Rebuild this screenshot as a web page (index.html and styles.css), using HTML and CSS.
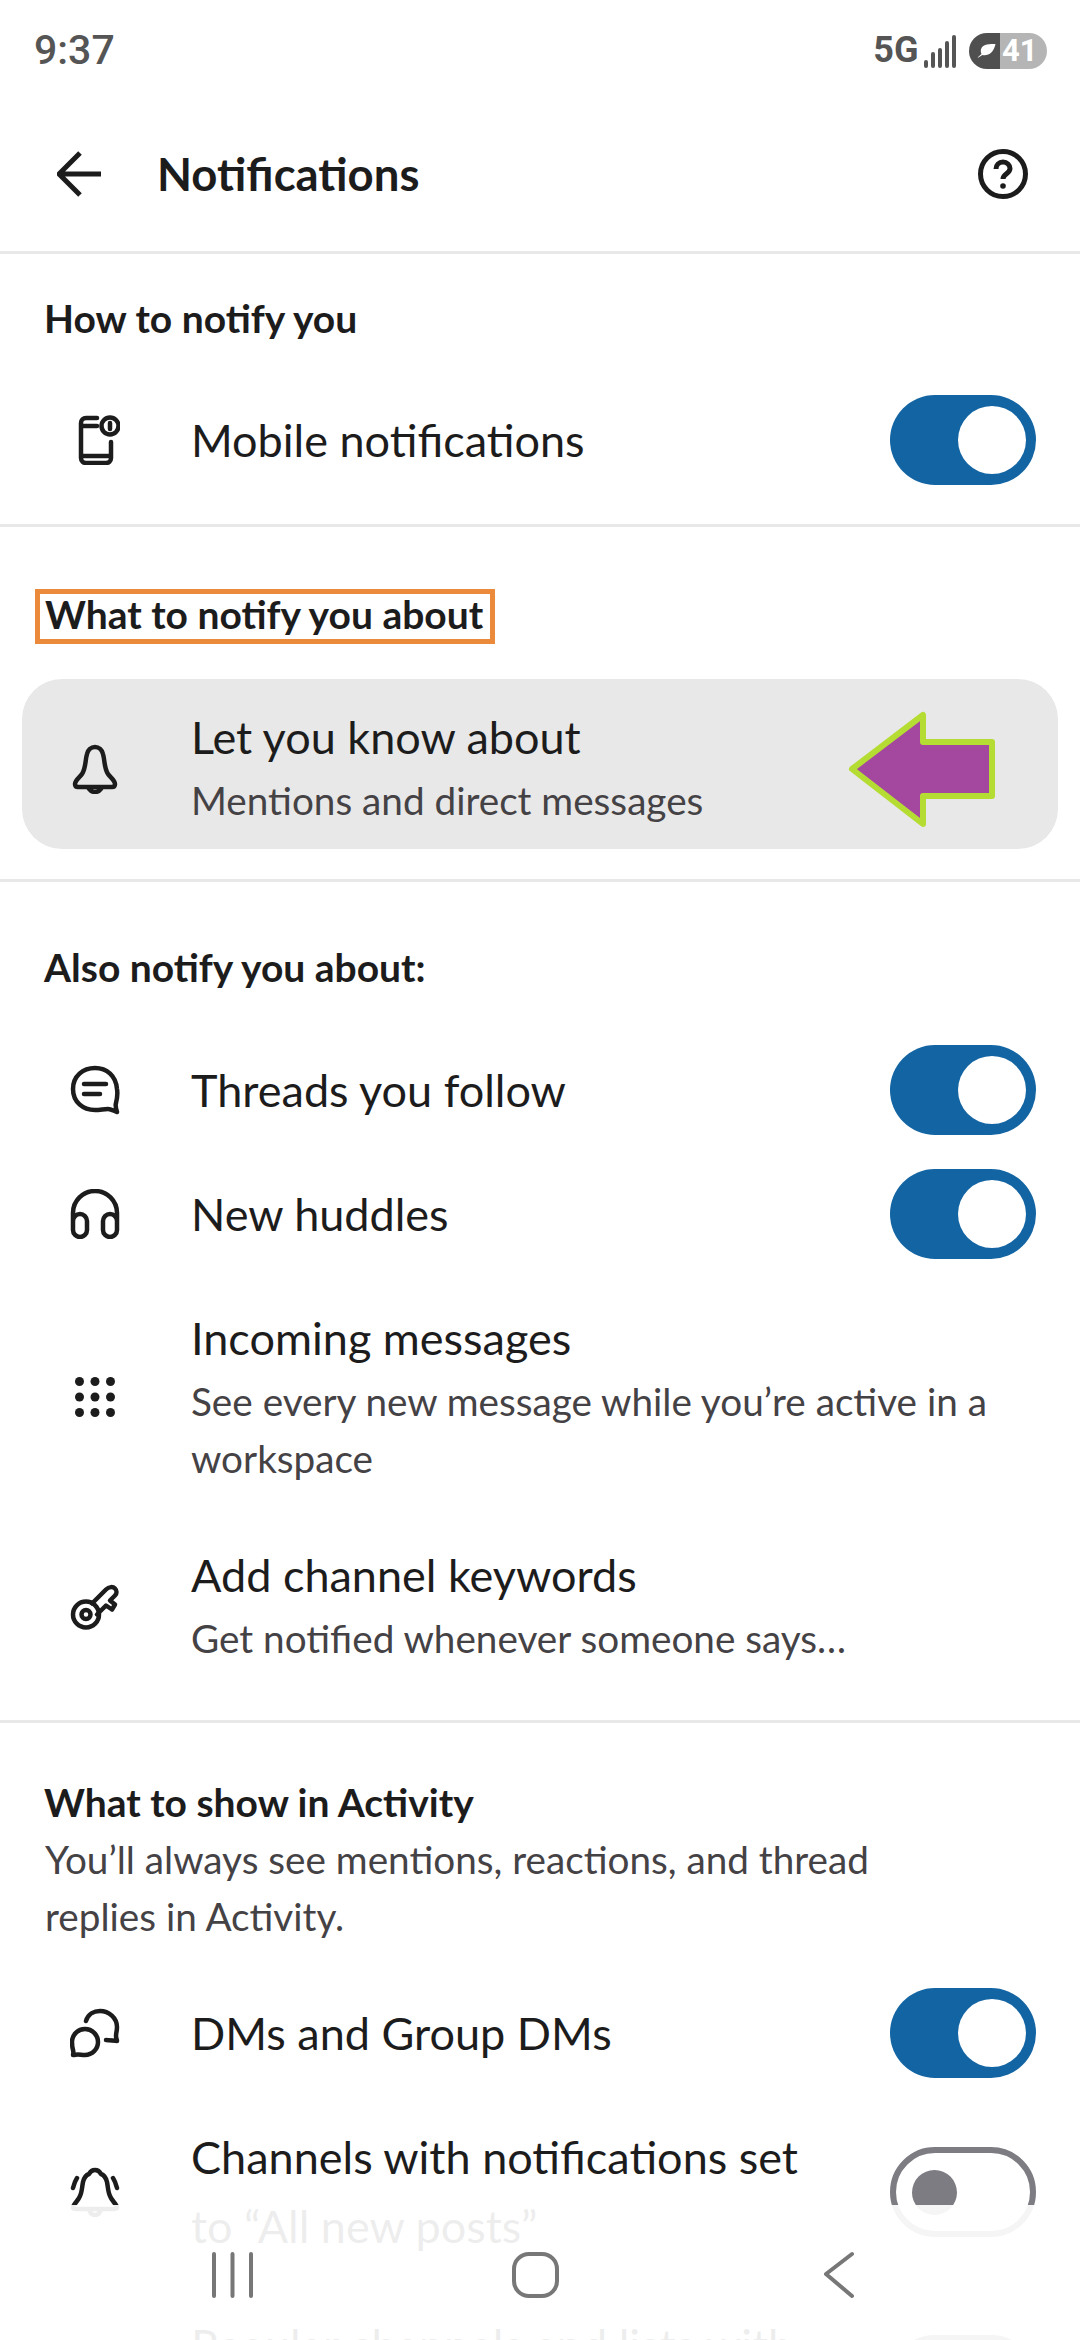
FILE: index.html
```html
<!DOCTYPE html>
<html lang="en">
<head>
<meta charset="utf-8">
<title>Notifications</title>
<link rel="stylesheet" href="styles.css">
</head>
<body>
<header class="status">
  <span class="time">9:37</span>
  <div class="status-right">
    <span class="net">5G</span>
    <div class="signal"><i class="s1"></i><i class="s2"></i><i class="s3"></i><i class="s4"></i><i class="s5"></i></div>
    <div class="battery">
      <span class="batt-left"><svg class="leaf" viewBox="0 0 20 16"><path d="M1 15c2-1 3-2 5-3 6 1 11-2 13-11-6 0-12 0-14 4-1 2-1 4 0 6-1 1-3 2-4 4z"/></svg></span>
      <span class="batt-right">41</span>
    </div>
  </div>
</header>
<div class="appbar">
  <svg class="back" viewBox="0 0 46 46"><path d="M44 23H3M23 2 2 23l21 21"/></svg>
  <h1 class="title">Notifications</h1>
  <svg class="help" viewBox="0 0 50 50"><circle cx="25" cy="25" r="22.5"/><path d="M18 20c0-4 3-7 7-7s7 3 7 6.500c0 5-7 5.500-7 10.500"/><circle class="dot" cx="25" cy="37" r="2.800"/></svg>
</div>

<section class="section s-how">
  <h2 class="heading">How to notify you</h2>
  <div class="row">
    <svg class="icon" viewBox="0 0 50 50"><path d="M27 3H16a5 5 0 0 0-5 5v35a5 5 0 0 0 5 5h20a5 5 0 0 0 5-5V27M11 11h16M11 41h30"/><circle cx="40" cy="11" r="8.500"/><path d="M40 8v6"/></svg>
    <div class="label">Mobile notifications</div>
    <div class="toggle on"><i></i></div>
  </div>
</section>

<section class="section s-what">
  <h2 class="heading"><span class="marked">What to notify you about</span></h2>
  <div class="card">
    <svg class="icon" viewBox="0 0 50 50"><path d="M25 3c-4 0-7 3-8 7-2 7-1 14-5 20-2 3-7 6-7 10 0 2 1 3 3 3h34c2 0 3-1 3-3 0-4-5-7-7-10-4-6-3-13-5-20-1-4-4-7-8-7zM18 43c1 3 4 5 7 5s6-2 7-5"/></svg>
    <div class="text">
      <div class="label">Let you know about</div>
      <div class="sub">Mentions and direct messages</div>
    </div>
    <svg class="pointer" viewBox="0 0 150 120"><path d="M4 60 75 6V33H144V87H75V115z"/></svg>
  </div>
</section>

<section class="section s-also">
  <h2 class="heading">Also notify you about:</h2>
  <div class="row">
    <svg class="icon" viewBox="0 0 50 50"><path d="M25 3C13 3 3 11 3 24s10 21 22 21c5 0 9-1 13-1 3 0 6 2 9 3-1-3-2-6-1-9 1-4 2-8 1-14C46 11 37 3 25 3zM14 19h22M14 29h16"/></svg>
    <div class="label">Threads you follow</div>
    <div class="toggle on"><i></i></div>
  </div>
  <div class="row">
    <svg class="icon" viewBox="0 0 50 50"><path d="M3 36V24a22 22 0 0 1 44 0v12M3 32a7 7 0 0 1 14 0v9a7 7 0 0 1-14 0zM33 32a7 7 0 0 1 14 0v9a7 7 0 0 1-14 0z"/></svg>
    <div class="label">New huddles</div>
    <div class="toggle on"><i></i></div>
  </div>
  <div class="row tall">
    <svg class="icon icon-fill" viewBox="0 0 50 50"><circle cx="9.500" cy="9.500" r="4.500"/><circle cx="25" cy="9.500" r="4.500"/><circle cx="40.500" cy="9.500" r="4.500"/><circle cx="9.500" cy="25" r="4.500"/><circle cx="25" cy="25" r="4.500"/><circle cx="40.500" cy="25" r="4.500"/><circle cx="9.500" cy="40.500" r="4.500"/><circle cx="25" cy="40.500" r="4.500"/><circle cx="40.500" cy="40.500" r="4.500"/></svg>
    <div class="text">
      <div class="label">Incoming messages</div>
      <div class="sub">See every new message while you’re active in a workspace</div>
    </div>
  </div>
  <div class="row tall">
    <svg class="icon" viewBox="0 0 50 50"><circle cx="16" cy="33.500" r="13"/><circle cx="16" cy="33.500" r="4.500"/><path d="M22 22.500 36 8.500c3-3 7-3 9-1s2 5 0 7l-5 5 5 4-3 5-6-4-9 9"/></svg>
    <div class="text">
      <div class="label">Add channel keywords</div>
      <div class="sub">Get notified whenever someone says…</div>
    </div>
  </div>
</section>

<section class="section s-show">
  <h2 class="heading">What to show in Activity</h2>
  <p class="note">You’ll always see mentions, reactions, and thread replies in Activity.</p>
  <div class="row">
    <svg class="icon" viewBox="0 0 50 50"><path d="M16 13C18 6 24 3 30 3c9 0 17 7 17 16 0 4-1 6-1 9 0 2 1 4 1 5-3 0-7-1-11-1M15 21a13 13 0 0 1 0 26c-3 0-5-.5-7-.5-2 0-3 .5-5 .5.5-2 .5-3.500 0-5-.5-2-1-4-1-8a13 13 0 0 1 13-13z"/></svg>
    <div class="label">DMs and Group DMs</div>
    <div class="toggle on"><i></i></div>
  </div>
  <div class="row tall wrap">
    <svg class="icon" viewBox="0 0 50 50"><path d="M25 3c-3 0-5 2-6 4-3 1-5 4-6 8-1 5-1 10-3 14-1 3-4 6-6 9-2 3-1 4 2 4h38c3 0 4-1 2-4-2-3-5-6-6-9-2-4-2-9-3-14-1-4-3-7-6-8-1-2-3-4-6-4zM19 42c1 4 3 6 6 6s5-2 6-6M3 21c1-4 2-7 4-10M47 21c-1-4-2-7-4-10"/></svg>
    <div class="label">Channels with notifications set to “All new posts”</div>
    <div class="toggle off"><i></i></div>
  </div>
  <div class="row tall wrap">
    <span class="icon"></span>
    <div class="label">Regular channels and lists with items and more</div>
    <div class="toggle off"><i></i></div>
  </div>
</section>

<nav class="nav">
  <svg class="nav-icon" viewBox="0 0 60 48"><path d="M11 3v42M29.500 3v42M48 3v42"/></svg>
  <svg class="nav-icon" viewBox="0 0 60 48"><rect x="9" y="3" width="43" height="42" rx="15"/></svg>
  <svg class="nav-icon" viewBox="0 0 60 48"><path d="M45 3 19 23l26 22"/></svg>
</nav>
</body>
</html>
```
FILE: styles.css
```css
* { box-sizing: border-box; }
html, body { margin: 0; padding: 0; }
body {
  width: 1080px;
  height: 2340px;
  overflow: hidden;
  position: relative;
  background: #fff;
  color: #1d1c1d;
  font-family: "Lato", "Liberation Sans", sans-serif;
}
h1, h2, p { margin: 0; }

.status {
  height: 100px;
  display: flex;
  align-items: center;
  justify-content: space-between;
  padding: 0 33px 0 34px;
  font-family: "Roboto", "Liberation Sans", sans-serif;
  color: #555;
}
.time { font-size: 41px; font-weight: 500; }
.status-right { display: flex; align-items: center; }
.net { font-size: 36px; font-weight: 700; margin-right: 5px; }
.signal { display: flex; align-items: flex-end; gap: 2.500px; height: 34px; margin-right: 13px; margin-top: 1px; }
.signal i { display: block; width: 4.500px; background: #555; border-radius: 2px; }
.s1 { height: 8px; } .s2 { height: 16px; } .s3 { height: 20px; } .s4 { height: 27px; } .s5 { height: 33px; }
.battery { display: flex; height: 36px; width: 78px; border-radius: 18px; overflow: hidden; margin-top: 2px; }
.batt-left { width: 31px; background: #4f4f4f; display: flex; align-items: center; justify-content: flex-end; padding-right: 3px; }
.leaf { width: 21px; height: 16px; fill: #fff; }
.batt-right { flex: 1; background: #b5b5b5; color: #fff; font-size: 31px; font-weight: 700; line-height: 36px; padding-left: 2px; }

.appbar {
  height: 154px;
  display: flex;
  align-items: center;
  padding: 0 52px 3px 57px;
  border-bottom: 3px solid #e8e8e8;
}
.back { width: 46px; height: 46px; fill: none; stroke: #1d1c1d; stroke-width: 5; margin-right: 54px; }
.title { flex: 1; font-size: 45.500px; font-weight: 700; line-height: 60px; }
.help { width: 50px; height: 50px; fill: none; stroke: #1d1c1d; stroke-width: 5; }
.help .dot { fill: #1d1c1d; stroke: none; }

.section { border-bottom: 3px solid #e8e8e8; }
.s-how { padding: 39px 0 22px; }
.s-what { padding: 62px 0 30px; }
.s-also { padding: 60px 0 27px; }
.s-show { padding: 54px 0 0; border-bottom: 0; }

.heading {
  font-size: 39px;
  font-weight: 700;
  line-height: 50px;
  padding-left: 44px;
  margin-bottom: 35px;
}
.marked {
  display: block;
  width: fit-content;
  margin: 5px 0 0 -4px;
  padding: 0 7px 5px 5px;
  line-height: 40px;
  outline: 5px solid #ec8a3c;
}
.s-what .heading { margin-bottom: 40px; }
.s-also .heading { margin-bottom: 36px; }

.row {
  display: flex;
  align-items: center;
  min-height: 124px;
  padding: 0 44px 0 70px;
}
.tall { padding-top: 31px; padding-bottom: 26px; }
.wrap { padding-top: 28px; padding-bottom: 22px; }
.wrap .label { line-height: 69px; padding-right: 60px; }
.icon {
  flex: none;
  width: 50px;
  height: 50px;
  margin-right: 71px;
  fill: none;
  stroke: #1d1c1d;
  stroke-width: 4.500;
  stroke-linecap: round;
  stroke-linejoin: round;
}
.icon-fill { fill: #1d1c1d; stroke: none; }
.text, .row > .label { flex: 1; min-width: 0; }
.label { font-size: 45px; line-height: 62px; font-weight: 400; }
.sub { font-size: 38.700px; line-height: 57px; margin-top: 4px; color: #454245; }
.note { font-size: 38.700px; line-height: 57px; color: #454245; padding: 4px 115px 0 45px; margin: -35px 0 26px; }

.toggle {
  flex: none;
  display: flex;
  align-items: center;
  width: 146px;
  height: 90px;
  border-radius: 45px;
}
.toggle i { display: block; border-radius: 50%; }
.toggle.on { background: #1264a3; justify-content: flex-end; padding-right: 10px; }
.toggle.on i { width: 68px; height: 68px; background: #fff; }
.toggle.off { border: 6px solid #7c7c82; background: #fff; padding-left: 16px; }
.toggle.off i { width: 45px; height: 45px; background: #7c7c82; }

.card {
  position: relative;
  display: flex;
  align-items: center;
  height: 170px;
  margin: 0 22px;
  padding: 7px 48px 0;
  border-radius: 40px;
  background: #e8e8e8;
}
.card .icon { margin-top: 2px; }
.pointer {
  position: absolute;
  left: 826px;
  top: 30px;
  width: 150px;
  height: 120px;
  fill: #a3489e;
  stroke: #b5dc33;
  stroke-width: 6;
  stroke-linejoin: round;
}

.nav {
  position: absolute;
  left: 0;
  right: 0;
  bottom: 0;
  height: 135px;
  display: grid;
  grid-template-columns: repeat(3, 302px);
  justify-items: center;
  padding: 46px 0 0 82px;
  background: rgba(255, 255, 255, .92);
}
.nav-icon {
  width: 60px;
  height: 48px;
  fill: none;
  stroke: #777;
  stroke-width: 4;
  stroke-linecap: round;
  stroke-linejoin: round;
}
```
